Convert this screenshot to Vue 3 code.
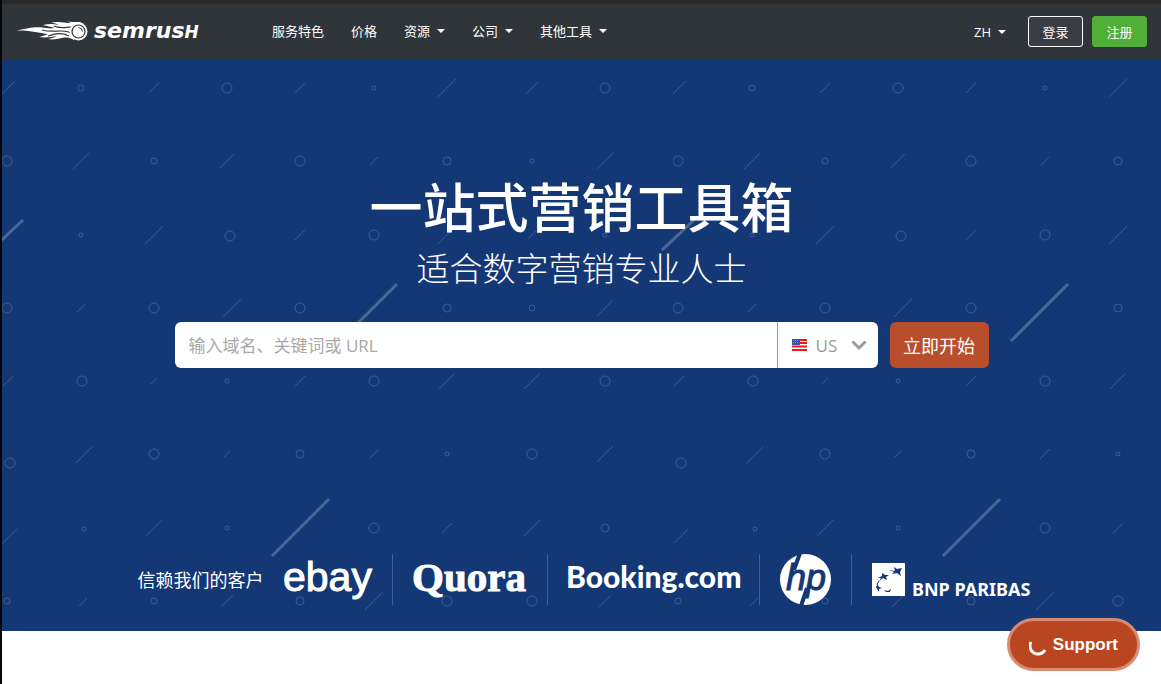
<script setup>
import { ref } from 'vue'

const query = ref('')
const country = ref('US')

const navItems = [
  { label: '服务特色', menu: false },
  { label: '价格', menu: false },
  { label: '资源', menu: true },
  { label: '公司', menu: true },
  { label: '其他工具', menu: true },
]

// Decorative shapes of one background tile: circles [x, y, r], strokes [x, y, half-length]
const circles = [
  [79, 29, 3], [225, 29, 5], [372, 29, 2], [603, 29, 5],
  [5, 102, 5], [152, 102, 3], [298, 102, 5], [445, 102, 4], [530, 102, 2],
  [79, 176, 2], [228, 177, 5], [372, 176, 5], [603, 176, 2],
  [5, 249, 5], [152, 249, 5], [298, 249, 5], [445, 249, 4], [530, 249, 3],
  [80, 322, 5], [225, 322, 2], [372, 322, 5], [603, 322, 5],
  [8, 404, 5], [152, 395, 5], [298, 395, 4], [445, 395, 2], [530, 395, 5],
  [82, 470, 2], [225, 469, 2], [372, 469, 5], [603, 469, 4],
  [5, 542, 3], [152, 542, 3], [298, 542, 4], [445, 542, 5], [530, 542, 5],
]
const strokes = [
  [6, 29, 7], [152, 29, 5], [298, 29, 5], [445, 29, 9], [530, 29, 6],
  [79, 102, 8], [225, 102, 7], [372, 102, 4], [603, 102, 8],
  [152, 176, 9], [298, 176, 5], [445, 176, 9], [530, 176, 4],
  [79, 249, 4], [230, 249, 9], [603, 249, 8],
  [6, 322, 5], [152, 322, 3], [298, 322, 5], [445, 322, 8], [530, 322, 8],
  [82, 396, 8], [225, 395, 3], [372, 395, 5], [603, 395, 8],
  [8, 477, 7], [152, 469, 8], [445, 469, 5], [530, 469, 8],
  [81, 543, 4], [225, 542, 6], [372, 542, 9], [603, 542, 6],
]
</script>

<template>
  <div class="page">
    <header class="header">
      <a class="brand" href="#" aria-label="semrush">
        <svg width="190" height="36" viewBox="0 -6 190 36">
          <path fill="#fff" d="M-1 10.500C10 8 17 6.500 24 7.500C29 8 32 9 37 8C33 7 29 6 25 5C31 3.500 36 4 41 5C39 4 36 3 33 2.500C41 1 47 3 53 3C51 2 49 1.500 48 1.500C55 2 57 2 62 2L66 4L56 20C53 18 49 17 44 18C39 19 35 20 30 19C35 18 37 17 39 16C33 17 27 18 21 17C25 16 28 15 30 14C20 13 13 10 -1 10.500Z" />
          <path fill="none" stroke="#303539" stroke-width="1.200" d="M24 10C31 12 36 11 43 11C49 11 52 12 54 14M36 6C42 9 48 7 54 7M30 16C37 14 43 12 51 16" />
          <circle cx="60.500" cy="11.500" r="9" fill="#fff" />
          <circle cx="60.500" cy="11.500" r="6.500" fill="none" stroke="#303539" stroke-width="1.200" />
          <path d="M60.500 7.500Q64.500 8 64.500 11.500" fill="none" stroke="#303539" />
          <text class="semrush" x="76" y="18">semrus<tspan class="semrush-cap">H</tspan></text>
        </svg>
      </a>
      <nav class="nav">
        <a v-for="item in navItems" :key="item.label" href="#">
          {{ item.label }}<i v-if="item.menu" class="caret"></i>
        </a>
      </nav>
      <div class="account">
        <button class="lang" type="button">ZH<i class="caret"></i></button>
        <button class="btn login" type="button">登录</button>
        <button class="btn register" type="button">注册</button>
      </div>
    </header>

    <main class="hero">
      <svg class="backdrop" width="100%" height="100%" aria-hidden="true">
        <defs>
          <pattern id="tile" width="671" height="572" patternUnits="userSpaceOnUse">
            <g fill="none" stroke="#fff" stroke-opacity="0.17">
              <circle v-for="(c, i) in circles" :key="'c' + i" :cx="c[0]" :cy="c[1]" :r="c[2]" />
              <path v-for="(s, i) in strokes" :key="'s' + i" :d="`M${s[0] - s[2]} ${s[1] + s[2]}L${s[0] + s[2]} ${s[1] - s[2]}`" />
            </g>
            <path d="M-11 191L21 161M660 191L692 161M338 282L395 225M270 497L327 440" stroke="#fff" stroke-opacity="0.24" stroke-width="3" fill="none" />
          </pattern>
        </defs>
        <rect width="100%" height="100%" fill="url(#tile)" />
      </svg>

      <h1>一站式营销工具箱</h1>
      <p class="subtitle">适合数字营销专业人士</p>

      <form class="search" @submit.prevent>
        <div class="field">
          <input v-model="query" type="text" aria-label="输入域名、关键词或 URL" placeholder="输入域名、关键词或 URL" />
          <label class="country">
            <svg width="15" height="12" viewBox="0 0 15 12" aria-hidden="true">
              <rect width="15" height="12" fill="#fff" />
              <path d="M0 1H15M0 4H15M0 7.500H15M0 11H15" stroke="#f01818" stroke-width="2" />
              <rect width="8" height="6" fill="#3f51a8" />
              <path d="M1 1.500H7M1 3.500H7" stroke="#7c88c8" stroke-dasharray="1 1" />
            </svg>
            <select v-model="country" aria-label="国家">
              <option>US</option>
            </select>
            <svg class="chevron" width="16" height="11" viewBox="0 0 16 11" aria-hidden="true">
              <path d="M1.500 1.500L8 8L14.500 1.500" fill="none" stroke="#999" stroke-width="3" />
            </svg>
          </label>
        </div>
        <button class="start" type="submit">立即开始</button>
      </form>

      <section class="clients">
        <span class="clients-label">信赖我们的客户</span>
        <ul>
          <li>
            <svg width="88" height="51" viewBox="0 0 88 51"><text class="ebay" x="-1" y="37">ebay</text></svg>
          </li>
          <li>
            <svg width="114" height="51" viewBox="0 0 114 51"><text class="quora" x="-1" y="37">Quora</text></svg>
          </li>
          <li>
            <svg width="171" height="51" viewBox="0 0 171 51"><text class="booking" x="-2" y="34">Booking.com</text></svg>
          </li>
          <li>
            <svg width="51" height="51" viewBox="0 0 51 51">
              <circle cx="25.500" cy="25.500" r="25.500" fill="#fff" />
              <path d="M14 16L20 -1M21 52L27 34" stroke="#143775" stroke-width="4" />
              <text class="hp" x="6" y="36">hp</text>
            </svg>
          </li>
          <li>
            <svg width="160" height="51" viewBox="0 0 160 51">
              <rect y="9" width="33" height="33" fill="#fff" />
              <g fill="#143775">
                <path d="M17 16L23 17L22 13L25 15L30 14L28 18L29 22L25 19L20 20L22 18Z" />
                <path d="M6 24L10 22L10 19L13 21L17 21L14 23L15 26L11 24L7 27L9 24Z" />
                <path d="M4 33L5 31L7 33L10 34L7 35L7 38L5 35Z" />
                <path d="M12 36L16 37L19 35L18 38L14 38Z" />
              </g>
              <path d="M7 27Q4 30 6 33" fill="none" stroke="#143775" />
              <text class="bnp" x="40" y="42">BNP PARIBAS</text>
            </svg>
          </li>
        </ul>
      </section>
    </main>

    <button class="support" type="button">
      <svg width="18" height="16" viewBox="0 0 18 16" aria-hidden="true">
        <path d="M2 2A7.500 7.500 0 0 0 16 10" fill="none" stroke="#fff" stroke-width="3" />
      </svg>
      Support
    </button>
  </div>
</template>

<style>
body {
  margin: 0;
  background: #fff;
}
</style>

<style scoped>
.page {
  box-sizing: border-box;
  min-height: 100vh;
  border-left: 2px solid #05070a;
  font-family: "Open Sans", "Noto Sans CJK SC", sans-serif;
  color: #fff;
}
button,
input,
select {
  font-family: inherit;
}
.header {
  display: flex;
  align-items: center;
  height: 55px;
  padding: 0 14px 0 16px;
  border-top: 4px solid #292929;
  background: #303539;
}
.brand {
  display: flex;
  width: 254px;
}
.brand svg {
  overflow: visible;
}
.semrush {
  font: italic bold 22px "DejaVu Sans", sans-serif;
  fill: #fff;
}
.semrush-cap {
  font-size: 17px;
}
.nav {
  display: flex;
  gap: 27px;
}
.nav a {
  display: flex;
  align-items: center;
  padding-bottom: 2px;
  font-size: 13px;
  color: #fff;
  text-decoration: none;
}
.caret {
  margin-left: 7px;
  border: 4px solid transparent;
  border-top-color: #fff;
  border-bottom: 0;
}
.account {
  display: flex;
  align-items: center;
  margin-left: auto;
}
.lang {
  display: flex;
  align-items: center;
  margin-right: 22px;
  padding: 0;
  border: 0;
  background: none;
  color: #fff;
  font-size: 13px;
}
.btn {
  width: 55px;
  height: 31px;
  padding: 0;
  border: 1px solid #fff;
  border-radius: 3px;
  background: #3a3e44;
  color: #fff;
  font-size: 13px;
}
.register {
  margin-left: 9px;
  border-color: #51ae38;
  background: #51ae38;
}
.hero {
  position: relative;
  padding: 117px 16px 26px;
  background: #143775;
  text-align: center;
}
.backdrop {
  position: absolute;
  inset: 0;
}
h1,
.subtitle,
.search,
.clients {
  position: relative;
}
h1 {
  margin: 0 0 5px;
  font-size: 53px;
  font-weight: 500;
  line-height: 64px;
}
.subtitle {
  margin: 0;
  font-size: 33px;
  font-weight: 300;
  line-height: 48px;
}
.search {
  display: flex;
  gap: 12px;
  max-width: 814px;
  margin: 29px auto 186px;
}
.field {
  display: flex;
  flex: 1;
  height: 46px;
  border-radius: 6px;
  background: #fff;
  overflow: hidden;
}
.field input {
  flex: 1;
  min-width: 0;
  padding: 0 14px;
  border: 0;
  outline: 0;
  background: none;
  color: #333;
  font-size: 17px;
}
.field input::placeholder {
  color: #a8a8a8;
  opacity: 1;
}
.country {
  display: flex;
  align-items: center;
  padding: 0 11px 0 14px;
  border-left: 1px solid #999;
}
.country select {
  appearance: none;
  width: 35px;
  margin-left: 9px;
  padding: 0;
  border: 0;
  outline: 0;
  background: none;
  color: #999;
  font-size: 17px;
}
.start {
  width: 99px;
  padding: 0;
  border: 0;
  border-radius: 6px;
  background: #b94e2c;
  color: #fff;
  font-size: 18px;
}
.clients {
  display: flex;
  align-items: center;
  justify-content: center;
  padding-left: 26px;
}
.clients-label {
  padding-bottom: 2px;
  font-size: 18px;
  white-space: nowrap;
}
.clients ul {
  display: flex;
  margin: 0;
  padding: 0;
  list-style: none;
}
.clients li {
  display: flex;
  padding: 0 20px;
}
.clients li + li {
  border-left: 1px solid #416092;
}
.clients text {
  fill: #fff;
}
.clients svg {
  overflow: visible;
}
.ebay {
  font: 41px "Liberation Sans", sans-serif;
  stroke: #fff;
  stroke-width: 1px;
}
.quora {
  font: bold 41px "Liberation Serif", serif;
  stroke: #fff;
  stroke-width: 1px;
}
.booking {
  font: 900 30px Lato, sans-serif;
}
.clients .hp {
  font: italic 36px "Liberation Sans", sans-serif;
  fill: #143775;
  stroke: #143775;
  stroke-width: 1px;
}
.bnp {
  font: bold 18px "Noto Sans", sans-serif;
}
.support {
  position: fixed;
  right: 21px;
  bottom: 13px;
  display: flex;
  align-items: center;
  gap: 6px;
  height: 53px;
  padding: 0 19px;
  border: 3px solid #d98a72;
  border-radius: 27px;
  background: #b94620;
  color: #fff;
  font: bold 17px "Liberation Sans", sans-serif;
}
.support svg {
  margin-top: 6px;
}
</style>
